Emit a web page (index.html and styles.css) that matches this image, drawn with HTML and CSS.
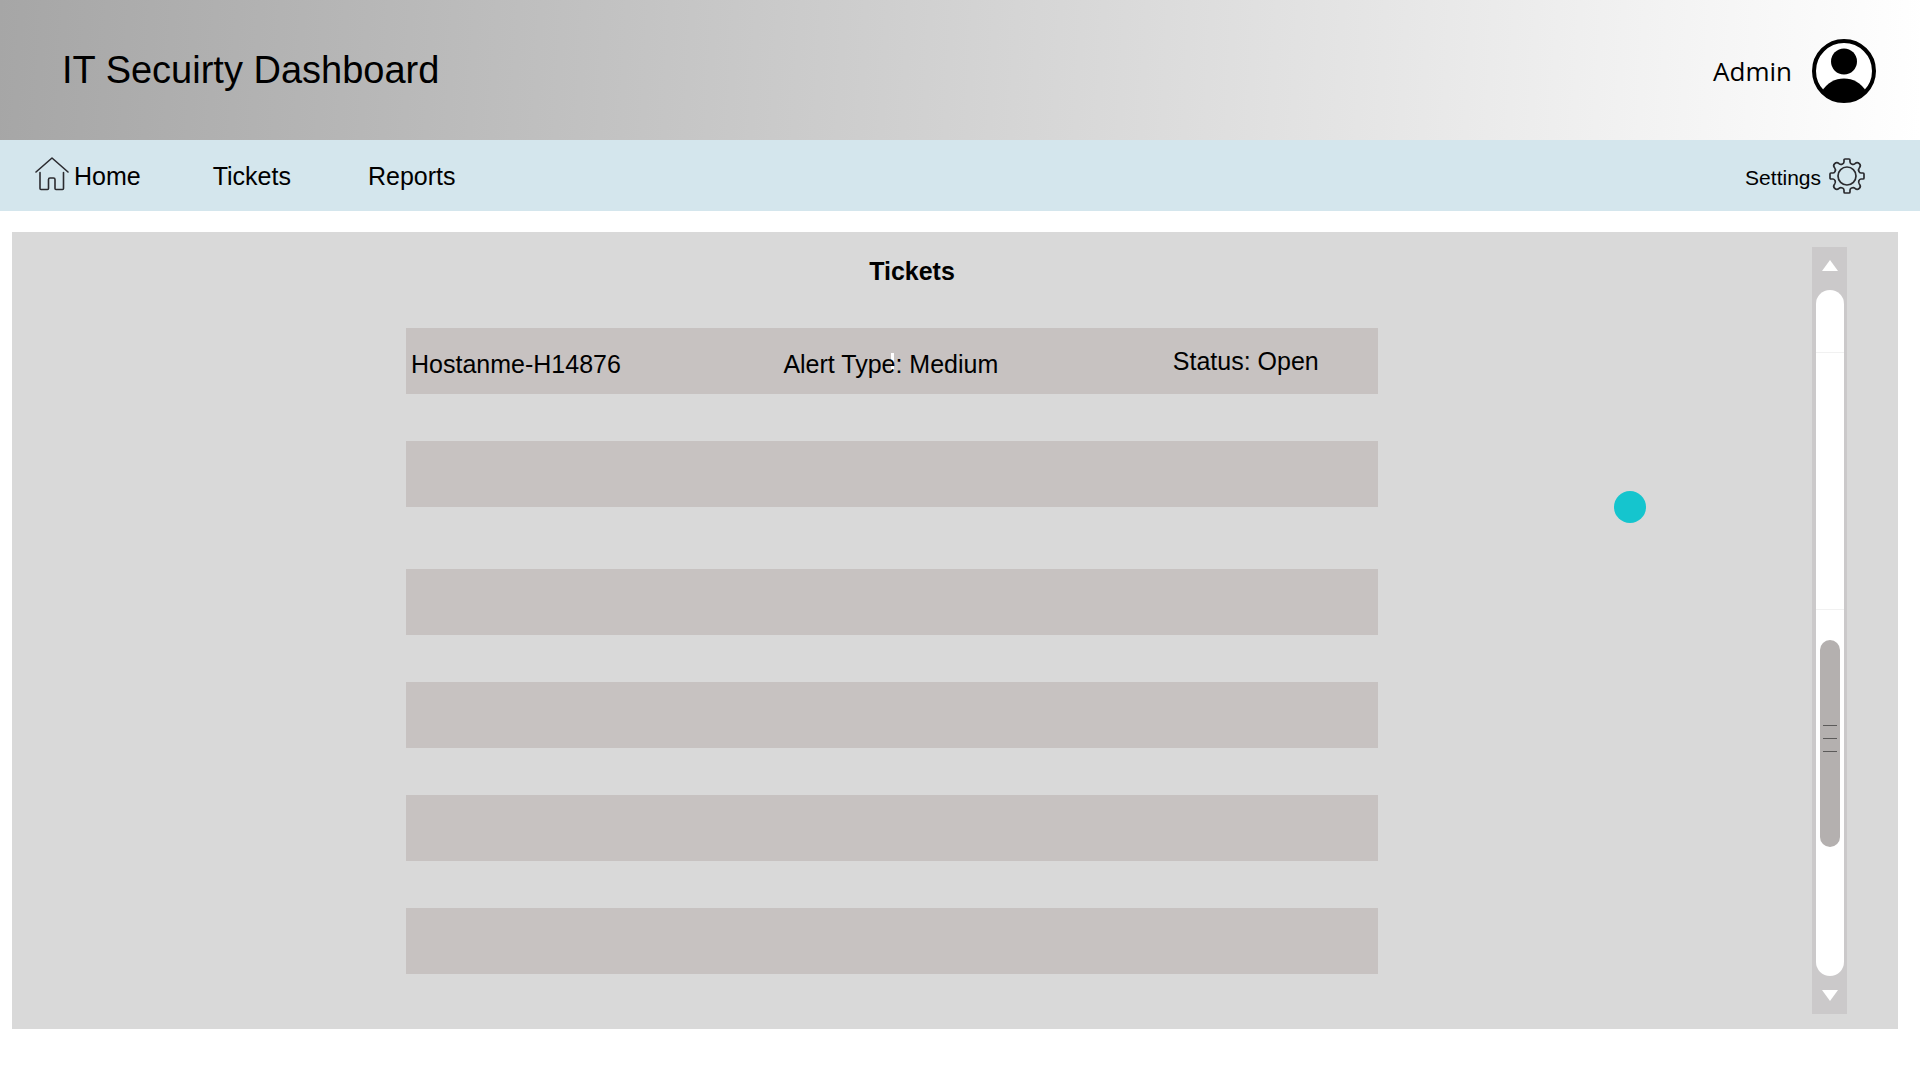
FILE: index.html
```html
<!DOCTYPE html>
<html lang="en">
<head>
<meta charset="utf-8">
<title>IT Secuirty Dashboard</title>
<link rel="stylesheet" href="styles.css">
</head>
<body>
<header class="header">
  <h1 class="header__title">IT Secuirty Dashboard</h1>
  <a class="header__user" href="#">
    <span class="header__name">Admin</span>
    <svg class="header__avatar" viewBox="0 0 64 64" aria-hidden="true">
      <circle cx="32" cy="32" r="30" fill="#fff" stroke="#000" stroke-width="4"/>
      <circle cx="32" cy="22.500" r="13"/>
      <path d="M10 52C15 44 23 39.500 32 39.500S49 44 54 52A31 31 0 0 1 10 52Z"/>
    </svg>
  </a>
</header>
<nav class="nav">
  <a class="nav__link nav__link--home" href="#">
    <svg class="nav__home" viewBox="0 0 34 38" fill="none" stroke="#2b2b2f" stroke-width="1.600" stroke-linecap="round" stroke-linejoin="round" aria-hidden="true">
      <path d="M1 15 17 1 33 15M5 15.500V31.500Q5 32.500 6 32.500H12.500Q13.500 32.500 13.500 31.500V22.500Q13.500 21 15 21H18.500Q20 21 20 22.500V31.500Q20 32.500 21 32.500H27.500Q28.500 32.500 28.500 31.500V15.500"/>
    </svg>
    Home
  </a>
  <a class="nav__link" href="#">Tickets</a>
  <a class="nav__link" href="#">Reports</a>
  <a class="nav__settings" href="#">
    <span class="nav__label">Settings</span>
    <svg class="nav__gear" viewBox="0 0 36 36" fill="none" stroke="#2b2b2f" stroke-width="1.700" stroke-linejoin="round" aria-hidden="true">
      <circle cx="18" cy="18" r="9"/>
      <path d="M15 4V2Q15 1 16 1H20Q21 1 21 2V4Q21.200 5.500 22.500 6Q24.500 7 26 5.700Q28.200 3.600 30.300 5.700Q32.400 7.800 30.300 10Q29 11.500 30 13.500Q30.500 14.800 32 15H34Q35 15 35 16V20Q35 21 34 21H32Q30.500 21.200 30 22.500Q29 24.500 30.300 26Q32.400 28.200 30.300 30.300Q28.200 32.400 26 30.300Q24.500 29 22.500 30Q21.200 30.500 21 32V34Q21 35 20 35H16Q15 35 15 34V32Q14.800 30.500 13.500 30Q11.500 29 10 30.300Q7.800 32.400 5.700 30.300Q3.600 28.200 5.700 26Q7 24.500 6 22.500Q5.500 21.200 4 21H2Q1 21 1 20V16Q1 15 2 15H4Q5.500 14.800 6 13.500Q7 11.500 5.700 10Q3.600 7.800 5.700 5.700Q7.800 3.600 10 5.700Q11.500 7 13.500 6Q14.800 5.500 15 4Z"/>
    </svg>
  </a>
</nav>
<main class="panel">
  <section class="tickets">
    <h2 class="tickets__title">Tickets</h2>
    <ul class="tickets__group">
      <li class="ticket">
        <span class="ticket__host">Hostanme-H14876</span>
        <span class="ticket__alert">Alert Type: Medium</span>
        <span class="ticket__status">Status: Open</span>
      </li>
      <li class="ticket"></li>
    </ul>
    <ul class="tickets__group">
      <li class="ticket"></li>
      <li class="ticket"></li>
      <li class="ticket"></li>
      <li class="ticket"></li>
    </ul>
  </section>
  <div class="scroll">
    <button class="scroll__button scroll__button--up" type="button" aria-label="Scroll up">
      <svg class="scroll__arrow" viewBox="0 0 16 11" aria-hidden="true"><path d="M8 0 16 11H0Z" fill="#fff"/></svg>
    </button>
    <div class="scroll__track">
      <div class="scroll__before"></div>
      <div class="scroll__thumb"><i class="scroll__grip"></i><i class="scroll__grip"></i><i class="scroll__grip"></i></div>
      <div class="scroll__after"></div>
    </div>
    <button class="scroll__button" type="button" aria-label="Scroll down">
      <svg class="scroll__arrow" viewBox="0 0 16 11" aria-hidden="true"><path d="M0 0H16L8 11Z" fill="#fff"/></svg>
    </button>
  </div>
  <span class="marker"></span>
</main>
</body>
</html>
```
FILE: styles.css
```css
* {
  box-sizing: border-box;
}

body {
  margin: 0;
  background: #fff;
  color: #000;
  font-family: "Liberation Sans", Arial, sans-serif;
  font-size: 25px;
  line-height: 30px;
}

a {
  color: inherit;
  text-decoration: none;
}

.header {
  display: flex;
  align-items: center;
  justify-content: space-between;
  min-height: 140px;
  padding: 0 44px 0 62px;
  background: linear-gradient(93deg, #a6a6a6, #fff);
}

.header__title {
  margin: 0;
  font-size: 38px;
  font-weight: 400;
  line-height: 48px;
}

.header__user {
  display: flex;
  align-items: center;
  gap: 20px;
  padding-top: 2px;
}

.header__name {
  font-family: "Open Sans", "Noto Sans", sans-serif;
  font-size: 26px;
}

.header__avatar {
  width: 64px;
  height: 64px;
}

.nav {
  display: flex;
  align-items: center;
  min-height: 71px;
  padding: 0 55px 0 35px;
  background: #d4e6ed;
}

.nav__link {
  margin-right: 77px;
}

.nav__link--home {
  display: flex;
  align-items: center;
  gap: 5px;
  margin-right: 72px;
}

.nav__home {
  width: 34px;
  height: 38px;
}

.nav__settings {
  display: flex;
  align-items: center;
  gap: 8px;
  margin-left: auto;
  font-size: 21px;
}

.nav__label {
  padding-top: 5px;
}

.nav__gear {
  width: 36px;
  height: 36px;
}

.panel {
  position: relative;
  display: flex;
  justify-content: space-between;
  margin: 21px 22px 48px 12px;
  padding: 15px 50px;
  background: #d9d9d9;
}

.tickets {
  display: flex;
  flex-direction: column;
  flex: 1;
  gap: 62px;
  padding: 9px 434px 40px 344px;
}

.tickets__title {
  margin: 0 0 -20px;
  padding-left: 40px;
  font-size: 25px;
  line-height: 30px;
  text-align: center;
}

.tickets__group {
  display: flex;
  flex-direction: column;
  gap: 47px;
  margin: 0;
  padding: 0;
  list-style: none;
}

.ticket {
  display: grid;
  grid-template-columns: 372fr 389fr 205fr;
  align-items: center;
  min-height: 66px;
  padding-left: 5px;
  background: #c7c2c1;
}

.ticket__host,
.ticket__alert {
  padding-top: 6px;
}

.ticket__alert {
  position: relative;
  z-index: 0;
}

/* caret shown behind the alert type */
.ticket__alert::before {
  content: "";
  position: absolute;
  z-index: -1;
  top: 10px;
  left: 108px;
  width: 3px;
  height: 18px;
  background: #fff;
}

.scroll {
  display: flex;
  flex-direction: column;
  width: 35px;
  margin-right: 1px;
  padding: 0 3px 0 4px;
  background: #cbc9ca;
}

.scroll__button {
  display: flex;
  align-items: center;
  justify-content: center;
  height: 38px;
  padding: 0;
  border: 0;
  background: none;
}

.scroll__button--up {
  height: 43px;
  padding-bottom: 6px;
}

.scroll__arrow {
  width: 16px;
  height: 11px;
}

.scroll__track {
  display: flex;
  flex: 1;
  flex-direction: column;
  padding: 0 4px;
  border-radius: 14px;
  background:
    linear-gradient(#f1f1f1, #f1f1f1) 0 62px / 100% 1px no-repeat,
    linear-gradient(#f1f1f1, #f1f1f1) 0 319px / 100% 1px no-repeat,
    #fff;
}

.scroll__before {
  flex: 351;
}

.scroll__thumb {
  display: flex;
  flex: 196;
  flex-direction: column;
  align-items: center;
  justify-content: center;
  gap: 12px;
  padding-bottom: 11px;
  border-radius: 10px;
  background: #b4b0af;
}

.scroll__grip {
  width: 14px;
  height: 1px;
  background: #5c5a5a;
}

.scroll__after {
  flex: 129;
}

.marker {
  position: absolute;
  top: 259px;
  right: 252px;
  width: 32px;
  height: 32px;
  border-radius: 50%;
  background: #15c5ce;
}
```
